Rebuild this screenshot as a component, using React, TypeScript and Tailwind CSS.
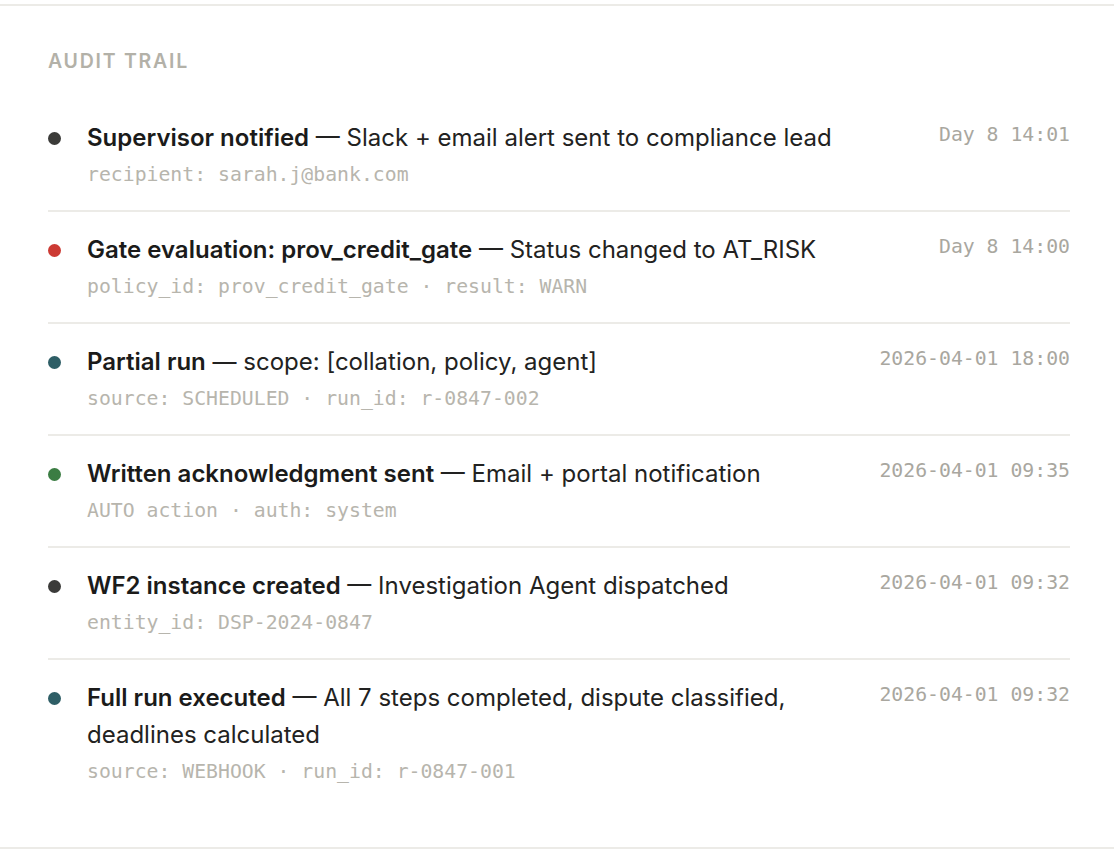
import React from 'react';

type AuditEntry = {
  title: string;
  detail: string;
  meta: string;
  time: string;
  dot: string;
};

const ENTRIES: AuditEntry[] = [
  {
    title: 'Supervisor notified',
    detail: 'Slack + email alert sent to compliance lead',
    meta: 'recipient: sarah.j@bank.com',
    time: 'Day 8 14:01',
    dot: 'bg-[#3b3b39]',
  },
  {
    title: 'Gate evaluation: prov_credit_gate',
    detail: 'Status changed to AT_RISK',
    meta: 'policy_id: prov_credit_gate · result: WARN',
    time: 'Day 8 14:00',
    dot: 'bg-[#cc3a33]',
  },
  {
    title: 'Partial run',
    detail: 'scope: [collation, policy, agent]',
    meta: 'source: SCHEDULED · run_id: r-0847-002',
    time: '2026-04-01 18:00',
    dot: 'bg-[#2e5e66]',
  },
  {
    title: 'Written acknowledgment sent',
    detail: 'Email + portal notification',
    meta: 'AUTO action · auth: system',
    time: '2026-04-01 09:35',
    dot: 'bg-[#3b7d43]',
  },
  {
    title: 'WF2 instance created',
    detail: 'Investigation Agent dispatched',
    meta: 'entity_id: DSP-2024-0847',
    time: '2026-04-01 09:32',
    dot: 'bg-[#3b3b39]',
  },
  {
    title: 'Full run executed',
    detail: 'All 7 steps completed, dispute classified, deadlines calculated',
    meta: 'source: WEBHOOK · run_id: r-0847-001',
    time: '2026-04-01 09:32',
    dot: 'bg-[#2e5e66]',
  },
];

const sans = "font-['Inter','Noto_Sans',sans-serif]";
const mono = "font-['DejaVu_Sans_Mono','Liberation_Mono',monospace]";

export default function App() {
  return (
    <div className={`min-h-screen bg-white pt-1 ${sans}`}>
      {/* audit panel */}
      <section className="border-y-2 border-[#ecebe7] pl-12 pr-11 py-10">
        <h2 className="text-[19.5px] leading-[30px] font-semibold uppercase tracking-[0.09em] text-[#b3b1a8] mb-6">
          Audit Trail
        </h2>

        <ul>
          {ENTRIES.map((e, i) => (
            <li
              key={i}
              className={`flex items-start pt-[19px] pb-[19px] ${
                i < ENTRIES.length - 1 ? 'border-b-2 border-[#ecebe7]' : ''
              }`}
            >
              <span className={`w-[13px] h-[13px] rounded-full shrink-0 mt-[13px] mr-[26px] ${e.dot}`} />
              <div className="flex-1 min-w-0">
                <p className="text-[24px] leading-[37px] text-[#222221]">
                  <span className="font-semibold text-[#1b1b1a]">{e.title}</span> — {e.detail}
                </p>
                <p className={`${mono} mt-[3px] text-[19.8px] leading-[32px] text-[#b7b5ad]`}>{e.meta}</p>
              </div>
              <span className={`${mono} shrink-0 ml-8 text-[19.8px] leading-[32px] text-[#a9a79f]`}>
                {e.time}
              </span>
            </li>
          ))}
        </ul>
      </section>
    </div>
  );
}
